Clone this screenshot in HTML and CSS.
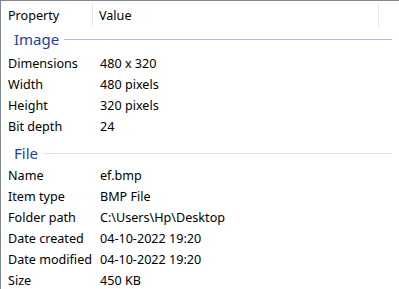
FILE: index.html
```html
<!DOCTYPE html>
<html>
<head>
<meta charset="utf-8">
<link rel="stylesheet" href="styles.css">
</head>
<body>
<div class="list">
  <div class="header">
    <div class="hcell prop">Property</div>
    <div class="hcell val">Value</div>
    <div class="hcell rest"></div>
  </div>
  <div class="group first"><span class="gname">Image</span><span class="gline img"></span></div>
  <div class="row"><span class="k">Dimensions</span><span class="v">480 x 320</span></div>
  <div class="row"><span class="k">Width</span><span class="v">480 pixels</span></div>
  <div class="row"><span class="k">Height</span><span class="v">320 pixels</span></div>
  <div class="row"><span class="k">Bit depth</span><span class="v">24</span></div>
  <div class="group later"><span class="gname">File</span><span class="gline file"></span></div>
  <div class="row"><span class="k">Name</span><span class="v">ef.bmp</span></div>
  <div class="row"><span class="k">Item type</span><span class="v">BMP File</span></div>
  <div class="row"><span class="k">Folder path</span><span class="v">C:\Users\Hp\Desktop</span></div>
  <div class="row"><span class="k">Date created</span><span class="v">04-10-2022 19:20</span></div>
  <div class="row"><span class="k">Date modified</span><span class="v">04-10-2022 19:20</span></div>
  <div class="row"><span class="k">Size</span><span class="v">450 KB</span></div>
</div>
</body>
</html>
```
FILE: styles.css
```css
html, body {
  margin: 0;
  padding: 0;
  background: #fff;
}
body {
  width: 399px;
  height: 289px;
  overflow: hidden;
  font-family: "Noto Sans", "Liberation Sans", sans-serif;
  font-size: 12.6px;
  color: #000;
}
.list {
  height: 289px;
  border-left: 1px solid #828790;
  border-top: 1px solid #828790;
  box-sizing: border-box;
}
.header {
  display: flex;
  height: 26px;
  align-items: stretch;
  padding-top: 3px;
  box-sizing: border-box;
}
.hcell {
  display: flex;
  align-items: center;
  padding-left: 7px;
  box-sizing: border-box;
}
.prop {
  width: 92px;
  border-right: 1px solid #e5e5e5;
}
.val {
  width: 286px;
  padding-left: 6px;
  border-right: 1px solid #e5e5e5;
}
.rest { flex: 1; }
.group {
  display: flex;
  align-items: center;
  padding-left: 13px;
  box-sizing: border-box;
}
.group.first {
  height: 26px;
  padding-bottom: 2px;
}
.group.later {
  height: 28px;
  padding-top: 4px;
}
.gname {
  font-size: 15px;
  line-height: 18px;
  color: #1e3fa0;
  margin-right: 5px;
}
.gline {
  flex: 1;
  height: 1px;
  margin-right: 7px;
}
.gline.img { background: #b5bcdd; }
.gline.file { background: #dde2f0; }
.row {
  display: flex;
  align-items: center;
  height: 21px;
  padding-left: 7px;
}
.k { width: 92px; }
.v { flex: 1; }
```
